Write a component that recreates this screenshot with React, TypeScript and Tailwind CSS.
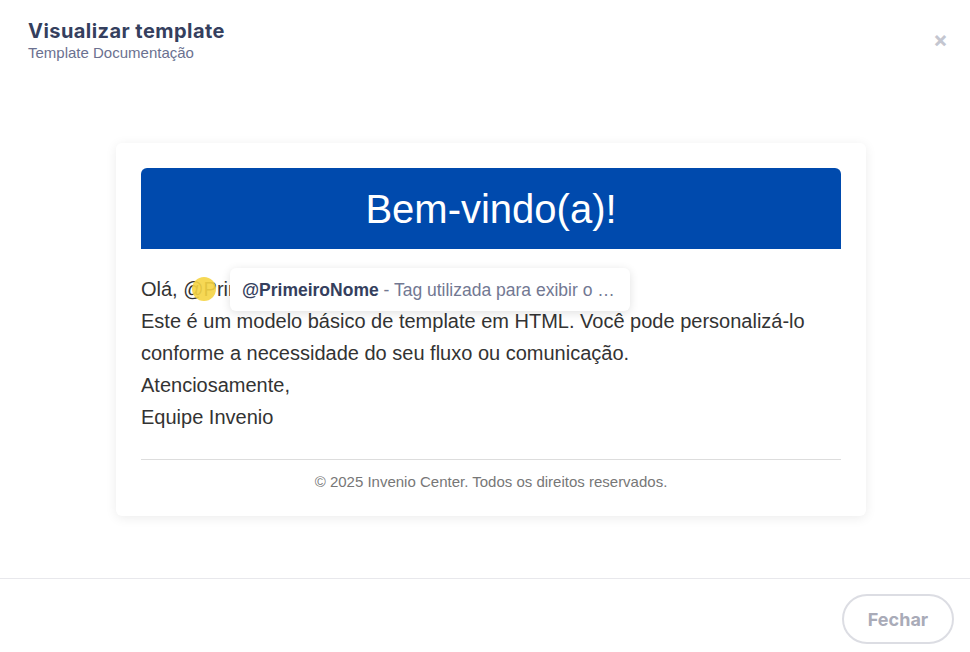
import React from "react";

export default function App() {
  return (
    <div className="w-[970px] h-[652px] bg-white flex flex-col relative overflow-hidden" style={{ fontFamily: "Inter, sans-serif" }}>
      <div className="flex justify-between items-start pl-[28px] pr-[20px] pt-[18px] h-[100px]">
        <div className="flex flex-col">
          <div className="text-[20px] leading-[26px] font-bold text-[#353f5e] tracking-[0.45px]">Visualizar template</div>
          <div className="text-[15px] leading-[18px] text-[#6b7190]" style={{ fontFamily: "'Liberation Sans', Arial, sans-serif" }}>Template Documentação</div>
        </div>
        <button className="text-[#c4c6d0] text-[22px] leading-none mt-[10px] mr-[2px] font-bold">×</button>
      </div>

      <div className="flex-1 flex justify-center pt-[43px] pl-[12px]">
        <div className="w-[750px] h-[373px] bg-white rounded-[6px] shadow-[0_2px_12px_rgba(0,0,0,0.08)] px-[25px] pt-[25px]" style={{ fontFamily: "'Liberation Sans', Arial, sans-serif" }}>
          <div className="h-[81px] bg-[#004aad] rounded-t-[6px] flex items-center justify-center text-white text-[40px]">Bem-vindo(a)!</div>
          <div className="relative pt-[24px] text-[20px] leading-[32px] text-[#333]">
            <div>Olá, @PrimeiroNome</div>
            <div>Este é um modelo básico de template em HTML. Você pode personalizá-lo</div>
            <div>conforme a necessidade do seu fluxo ou comunicação.</div>
            <div>Atenciosamente,</div>
            <div>Equipe Invenio</div>
            <div className="absolute left-[51px] top-[28px] w-[24px] h-[24px] rounded-full bg-[#f5d442] opacity-90"></div>
            <div className="absolute left-[89px] top-[19px] w-[400px] h-[43px] bg-white rounded-[6px] shadow-[0_2px_10px_rgba(0,0,0,0.12)] flex items-center px-[12px] text-[17.5px] whitespace-nowrap overflow-hidden">
              <span className="font-bold text-[#353f5e]">@PrimeiroNome</span>
              <span className="text-[#727892]">&nbsp;- Tag utilizada para exibir o …</span>
            </div>
          </div>
          <div className="mt-[26px] border-t border-[#dddddd] pt-[12px] text-center text-[15px] leading-[20px] text-[#777]">© 2025 Invenio Center. Todos os direitos reservados.</div>
        </div>
      </div>

      <div className="h-[74px] border-t border-[#e8e8ec] flex items-center justify-end pr-[16px] pt-[7px]">
        <button className="w-[112px] h-[50px] rounded-full border-2 border-[#dcdde3] text-[#a9abb8] text-[18px] font-bold">Fechar</button>
      </div>
    </div>
  );
}
